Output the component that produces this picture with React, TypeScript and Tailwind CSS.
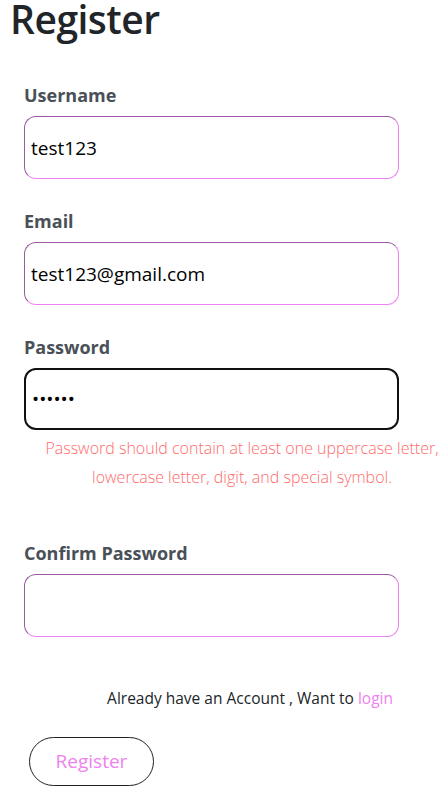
import React, { useState } from 'react';

const font = { fontFamily: '"Segoe UI", "Open Sans", "Noto Sans", sans-serif' };

const inputClass =
  'w-full h-[63px] rounded-[12px] border border-t-[#9b58a3] border-l-[#9b58a3] border-b-[#ee82ee] border-r-[#ee82ee] px-[6px] text-[19px] text-black outline-none bg-white';

const labelClass = 'block text-[18px] leading-[22px] font-bold text-[#495057] mb-[10px]';

const App: React.FC = () => {
  const [username, setUsername] = useState('test123');
  const [email, setEmail] = useState('test123@gmail.com');
  const [password, setPassword] = useState('aaaaaa');
  const [confirm, setConfirm] = useState('');

  return (
    <div className="min-h-[787px] bg-white overflow-hidden" style={font}>
      <h1 className="pl-[10px] text-[39px] leading-[38px] font-semibold tracking-[-0.5px] text-[#212529]">Register</h1>

      <form className="pl-[24px] w-[399px] mt-[46px]" onSubmit={(e) => e.preventDefault()}>
        <label className={labelClass}>Username</label>
        <input className={inputClass} value={username} onChange={(e) => setUsername(e.target.value)} />

        <label className={`${labelClass} mt-[31px]`}>Email</label>
        <input className={inputClass} value={email} onChange={(e) => setEmail(e.target.value)} />

        <label className={`${labelClass} mt-[31px]`}>Password</label>
        <input
          type="password"
          className="w-full h-[62px] rounded-[12px] border-2 border-[#111] px-[6px] text-[19px] text-black outline-none bg-white"
          value={password}
          onChange={(e) => setPassword(e.target.value)}
        />
      </form>

      <p className="ml-[38px] w-[408px] text-center text-[16px] leading-[29px] font-light text-[#ff6b6b] mt-[4px]">
        Password should contain at least one uppercase letter, lowercase letter, digit, and special symbol.
      </p>

      <div className="pl-[24px] w-[399px] mt-[50px]">
        <label className={`${labelClass} text-[18.5px]`}>Confirm Password</label>
        <input type="password" className={inputClass} value={confirm} onChange={(e) => setConfirm(e.target.value)} />

        <p className="mt-[50px] pr-[6px] text-right text-[15.5px] leading-[22px] text-[#212529]">
          Already have an Account , Want to <a className="text-[#ee82ee]">login</a>
        </p>

        <button className="mt-[28px] ml-[5px] w-[125px] h-[49px] rounded-full border border-[#222] text-[19px] text-[#ee82ee] bg-white">
          Register
        </button>
      </div>
    </div>
  );
};

export default App;
